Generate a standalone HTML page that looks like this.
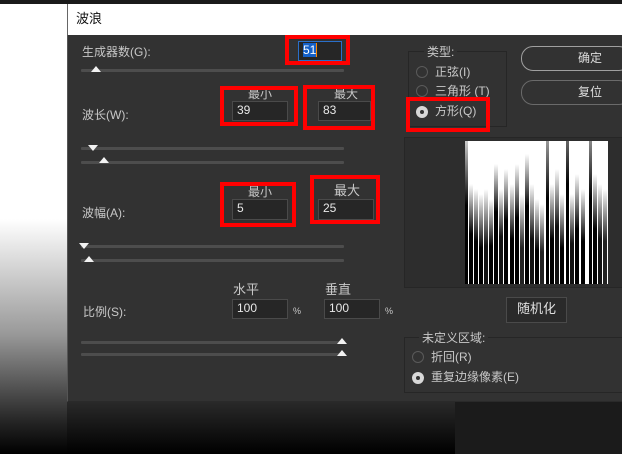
<!DOCTYPE html>
<html><head><meta charset="utf-8"><style>
*{margin:0;padding:0;box-sizing:border-box}
body{width:622px;height:454px;overflow:hidden;position:relative;background:#000;font-family:"Liberation Sans","Noto Sans CJK SC",sans-serif;font-size:12px;color:#c8c8c8}
.a{position:absolute}
.t{position:absolute;white-space:nowrap;line-height:14px}
.in{position:absolute;background:#262626;border:1px solid #4a4a4a;color:#e8e8e8;padding-left:4px;line-height:17px;font-size:12px}
.red{position:absolute;border:4px solid #f00}
.sl{position:absolute;height:3px;background:#4d4d4d;border-radius:1px}
.up{position:absolute;width:0;height:0;border-left:5px solid transparent;border-right:5px solid transparent;border-bottom:6px solid #f2f2f2}
.dn{position:absolute;width:0;height:0;border-left:5px solid transparent;border-right:5px solid transparent;border-top:6px solid #f2f2f2}
.rb{position:absolute;width:12px;height:12px;border-radius:50%;border:1px solid #5a5a5a}
.rs{position:absolute;width:12px;height:12px;border-radius:50%;background:#d8d8d8}
.rs:after{content:"";position:absolute;left:4px;top:4px;width:4px;height:4px;border-radius:50%;background:#333}
.bar{position:absolute;bottom:0;width:4px}
</style></head><body>
<div class="a" style="left:0;top:0;width:622px;height:4px;background:#1a1a1a"></div>
<div class="a" style="left:0;top:4px;width:67px;height:450px;background:linear-gradient(#fff 0,#fff 215px,#999 330px,#222 420px,#000 450px)"></div>
<div class="a" style="left:67px;top:401px;width:388px;height:53px;background:linear-gradient(#2a2a2a,#000)"></div>
<div class="a" style="left:455px;top:401px;width:167px;height:53px;background:#1b1b1b"></div>
<div class="a" style="left:67px;top:4px;width:555px;height:31px;background:#fff;border-left:1px solid #666"></div>
<div class="t" style="left:76px;top:12px;color:#111;font-size:13px">波浪</div>
<div class="a" style="left:67px;top:35px;width:555px;height:367px;background:#323232;border-left:1px solid #555;border-bottom:1px solid #2a2a2a"></div>

<div class="t" style="left:82px;top:45px">生成器数(G):</div>
<div class="in" style="left:298px;top:41px;width:44px;height:20px;border-color:#2a6fc9"><span style="background:#1560c8;color:#fff">51</span><span style="border-left:1px solid #f80"></span></div>
<div class="red" style="left:285px;top:35px;width:65px;height:30px"></div>
<div class="sl" style="left:81px;top:69px;width:263px"></div><div class="up" style="left:91px;top:66px"></div>

<div class="t" style="left:82px;top:108px">波长(W):</div>
<div class="t" style="left:248px;top:87px">最小</div><div class="t" style="left:334px;top:87px">最大</div>
<div class="in" style="left:232px;top:101px;width:56px;height:20px">39</div>
<div class="in" style="left:318px;top:101px;width:53px;height:20px">83</div>
<div class="red" style="left:220px;top:86px;width:78px;height:40px"></div>
<div class="red" style="left:303px;top:85px;width:72px;height:45px"></div>
<div class="sl" style="left:81px;top:147px;width:263px"></div><div class="dn" style="left:88px;top:145px"></div>
<div class="sl" style="left:81px;top:161px;width:263px"></div><div class="up" style="left:99px;top:157px"></div>

<div class="t" style="left:82px;top:206px">波幅(A):</div>
<div class="t" style="left:248px;top:185px">最小</div><div class="t" style="left:334px;top:184px;font-size:13px">最大</div>
<div class="in" style="left:232px;top:199px;width:56px;height:21px">5</div>
<div class="in" style="left:318px;top:199px;width:56px;height:21px">25</div>
<div class="red" style="left:220px;top:182px;width:76px;height:45px"></div>
<div class="red" style="left:310px;top:175px;width:70px;height:49px"></div>
<div class="sl" style="left:81px;top:245px;width:263px"></div><div class="dn" style="left:79px;top:243px"></div>
<div class="sl" style="left:81px;top:259px;width:263px"></div><div class="up" style="left:84px;top:256px"></div>

<div class="t" style="left:233px;top:283px;font-size:13px">水平</div><div class="t" style="left:325px;top:283px;font-size:13px">垂直</div>
<div class="t" style="left:83px;top:305px">比例(S):</div>
<div class="in" style="left:232px;top:299px;width:56px;height:20px">100</div>
<div class="in" style="left:324px;top:299px;width:56px;height:20px">100</div>
<div class="t" style="left:293px;top:304px;font-size:9px">%</div><div class="t" style="left:385px;top:304px;font-size:9px">%</div>
<div class="sl" style="left:81px;top:341px;width:263px"></div><div class="up" style="left:337px;top:338px"></div>
<div class="sl" style="left:81px;top:353px;width:263px"></div><div class="up" style="left:337px;top:350px"></div>

<div class="a" style="left:408px;top:51px;width:99px;height:76px;border:1px solid #262626"></div>
<div class="t" style="left:424px;top:45px;background:#323232;padding:0 3px">类型:</div>
<div class="rb" style="left:416px;top:66px"></div><div class="t" style="left:435px;top:65px">正弦(I)</div>
<div class="rb" style="left:416px;top:85px"></div><div class="t" style="left:435px;top:84px">三角形 (T)</div>
<div class="rs" style="left:416px;top:106px"></div><div class="t" style="left:435px;top:104px">方形(Q)</div>
<div class="red" style="left:406px;top:97px;width:84px;height:35px"></div>

<div class="a" style="left:521px;top:46px;width:110px;height:25px;border:1px solid #a0a0a0;border-radius:12px"></div>
<div class="t" style="left:578px;top:51px;color:#ddd">确定</div>
<div class="a" style="left:521px;top:80px;width:110px;height:25px;border:1px solid #6a6a6a;border-radius:12px"></div>
<div class="t" style="left:578px;top:85px;color:#ddd">复位</div>

<div class="a" style="left:404px;top:137px;width:220px;height:151px;background:#2d2d2d;border:1px solid #262626"></div>
<div class="a" style="left:465px;top:141px;width:143px;height:143px;background:#fff;overflow:hidden">
<div class="bar" style="left:0;width:3px;height:143px;background:linear-gradient(#ccc,#000 45%)"></div>
<div class="bar" style="left:4px;height:100px;background:linear-gradient(transparent,#000 50%)"></div>
<div class="bar" style="left:9px;height:95px;background:linear-gradient(transparent,#000 55%)"></div>
<div class="bar" style="left:14px;height:90px;background:linear-gradient(transparent,#000 60%)"></div>
<div class="bar" style="left:19px;height:95px;background:linear-gradient(transparent,#111 60%)"></div>
<div class="bar" style="left:24px;height:85px;background:linear-gradient(transparent,#000 55%)"></div>
<div class="bar" style="left:29px;height:120px;background:linear-gradient(transparent,#000 40%)"></div>
<div class="bar" style="left:34px;height:95px;background:linear-gradient(transparent,#111 50%)"></div>
<div class="bar" style="left:39px;height:115px;background:linear-gradient(transparent,#000 45%)"></div>
<div class="bar" style="left:45px;height:100px;background:linear-gradient(transparent,#000 55%)"></div>
<div class="bar" style="left:50px;height:120px;background:linear-gradient(transparent,#000 45%)"></div>
<div class="bar" style="left:55px;height:90px;background:linear-gradient(transparent,#222 60%)"></div>
<div class="bar" style="left:60px;height:130px;background:linear-gradient(transparent,#000 40%)"></div>
<div class="bar" style="left:65px;height:100px;background:linear-gradient(transparent,#111 55%)"></div>
<div class="bar" style="left:70px;height:85px;background:linear-gradient(transparent,#000 60%)"></div>
<div class="bar" style="left:75px;height:80px;background:linear-gradient(transparent,#222 60%)"></div>
<div class="bar" style="left:81px;width:3px;height:143px;background:linear-gradient(#999,#000 40%)"></div>
<div class="bar" style="left:85px;height:100px;background:linear-gradient(transparent,#000 55%)"></div>
<div class="bar" style="left:90px;height:115px;background:linear-gradient(transparent,#111 50%)"></div>
<div class="bar" style="left:95px;height:90px;background:linear-gradient(transparent,#000 60%)"></div>
<div class="bar" style="left:101px;width:3px;height:143px;background:linear-gradient(#666,#000 30%)"></div>
<div class="bar" style="left:105px;height:90px;background:linear-gradient(transparent,#111 55%)"></div>
<div class="bar" style="left:110px;height:110px;background:linear-gradient(transparent,#000 50%)"></div>
<div class="bar" style="left:116px;height:95px;background:linear-gradient(transparent,#000 55%)"></div>
<div class="bar" style="left:124px;width:3px;height:143px;background:linear-gradient(#888,#000 40%)"></div>
<div class="bar" style="left:128px;height:110px;background:linear-gradient(transparent,#000 50%)"></div>
<div class="bar" style="left:133px;height:100px;background:linear-gradient(transparent,#111 55%)"></div>
<div class="bar" style="left:138px;height:95px;background:linear-gradient(transparent,#222 55%)"></div>
</div>

<div class="a" style="left:506px;top:297px;width:61px;height:26px;background:#2a2a2a;border:1px solid #4a4a4a"></div>
<div class="t" style="left:517px;top:302px;color:#e0e0e0;font-size:13px">随机化</div>

<div class="a" style="left:404px;top:337px;width:220px;height:56px;border:1px solid #262626"></div>
<div class="t" style="left:419px;top:331px;background:#323232;padding:0 3px">未定义区域:</div>
<div class="rb" style="left:412px;top:351px"></div><div class="t" style="left:431px;top:350px">折回(R)</div>
<div class="rs" style="left:412px;top:372px"></div><div class="t" style="left:431px;top:370px">重复边缘像素(E)</div>
</body></html>
